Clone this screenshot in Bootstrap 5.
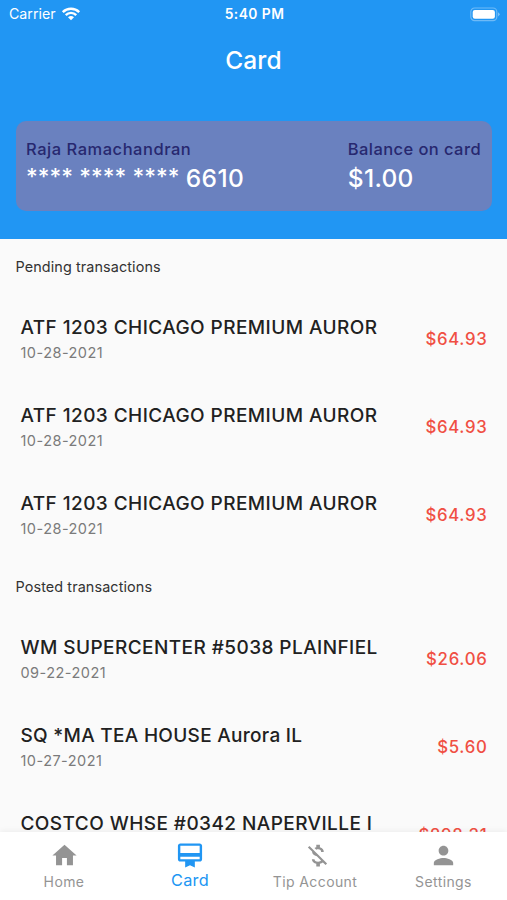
<!DOCTYPE html>
<html lang="en">
<head>
<meta charset="utf-8">
<meta name="viewport" content="width=device-width, initial-scale=1">
<title>Card</title>
<link href="https://cdn.jsdelivr.net/npm/bootstrap@5.3.0/dist/css/bootstrap.min.css" rel="stylesheet">
<style>
  body { font-family: Inter, "Liberation Sans", sans-serif; background: #fafafa; color: #212121; }
  .screen { height: 900px; }
  .top-area { height: 238.5px; background: #2196f3; }
  .status-bar { height: 28px; padding: 0 7px 0 9px; font-size: 14.2px; }
  .status-side { flex: 1 1 0; }
  .carrier { margin-right: 5px; }
  .status-time { font-size: 13.8px; font-weight: 600; letter-spacing: .45px; }
  .app-title { height: 65px; font-size: 24.5px; font-weight: 500; letter-spacing: .1px; }
  .bank-card { margin: 28px 15px 0 16px; height: 90px; padding: 16px 11px 0 10px; border-radius: 10px; background: #6a81bf; }
  .card-label { font-size: 16.5px; line-height: 24px; font-weight: 500; color: #27286f; letter-spacing: .52px; }
  .balance .card-label { letter-spacing: .42px; }
  .card-value { font-size: 24.5px; line-height: 35px; font-weight: 500; letter-spacing: .4px; }
  .balance .card-value { letter-spacing: .3px; }
  .masked { font-size: 22.5px; line-height: 1; letter-spacing: .08px; vertical-align: 2px; }
  .section-title { font-size: 14.4px; line-height: 20px; padding: 18px 16px 18px 15.5px; letter-spacing: .1px; color: #333; }
  .txn { height: 88px; padding: 3px 19.5px 0 20.5px; }
  .txn-text { margin-top: -2px; }
  .txn-name { font-size: 19px; line-height: 27px; font-weight: 500; letter-spacing: .43px; }
  .txn-mixed { letter-spacing: .3px; }
  .txn-date { font-size: 14.5px; line-height: 24px; color: #7b7b7b; letter-spacing: .47px; }
  .txn-amount { font-size: 16.8px; font-weight: 500; color: #f04f43; letter-spacing: .7px; }
  .tab-bar { height: 68.5px; background: #fff; box-shadow: 0 -1px 6px rgba(0,0,0,.06); z-index: 1; }
  .tab { color: #949494; font-size: 14px; line-height: 20px; letter-spacing: .4px; padding-top: 9px; }
  .tab svg { width: 29px; height: 29px; fill: currentColor; }
  .tab span { margin-top: 2px; }
  .tab.active { color: #2196f3; font-size: 16.3px; letter-spacing: .3px; padding-top: 9px; }
  .tab.active svg { width: 30px; height: 29px; }
  .tab.active span { margin-top: 0; }
  .w-home { width: 128px; } .w-card { width: 124px; } .w-tip { width: 126px; } .w-settings { width: 129px; padding-left: 2px; }
  .w-tip svg { margin-left: 5px; }
</style>
<script src="https://cdn.jsdelivr.net/npm/bootstrap@5.3.0/dist/js/bootstrap.bundle.min.js"></script>
</head>
<body>
<div class="screen d-flex flex-column overflow-hidden">
  <header class="top-area text-white flex-shrink-0">
    <div class="status-bar d-flex align-items-center">
      <div class="status-side d-flex align-items-center"><span class="carrier">Carrier</span>
        <svg width="20" height="14" viewBox="0 0 20 15" fill="none" stroke="#fff" stroke-width="2.6"><path d="M1.2 5.5a12.4 12.4 0 0 1 17.6 0M4.4 8.7a7.8 7.8 0 0 1 11.2 0"/><path d="M10 14.3 6.8 11a4.7 4.7 0 0 1 6.4 0z" fill="#fff" stroke="none"/></svg>
      </div>
      <div class="status-time">5:40 PM</div>
      <div class="status-side d-flex justify-content-end">
        <svg width="30" height="15" viewBox="0 0 30 15"><rect x=".8" y="1" width="26" height="12.6" rx="3.8" fill="none" stroke="#fff" stroke-opacity=".35" stroke-width="1.2"/><rect x="2.7" y="2.9" width="22.2" height="8.8" rx="2.2" fill="#fff"/><path d="M28 5.2q1.7 1 1.7 2.1T28 9.4z" fill="#fff" fill-opacity=".4"/></svg>
      </div>
    </div>
    <h1 class="app-title d-flex align-items-center justify-content-center m-0">Card</h1>
    <section class="bank-card d-flex justify-content-between">
      <div><div class="card-label">Raja Ramachandran</div><div class="card-value"><span class="masked">**** **** **** </span>6610</div></div>
      <div class="balance"><div class="card-label">Balance on card</div><div class="card-value">$1.00</div></div>
    </section>
  </header>
  <main class="flex-grow-1 overflow-hidden">
    <h2 class="section-title m-0 fw-normal">Pending transactions</h2>
    <div class="txn d-flex justify-content-between align-items-center"><div class="txn-text"><div class="txn-name">ATF 1203 CHICAGO PREMIUM AUROR</div><div class="txn-date">10-28-2021</div></div><div class="txn-amount">$64.93</div></div>
    <div class="txn d-flex justify-content-between align-items-center"><div class="txn-text"><div class="txn-name">ATF 1203 CHICAGO PREMIUM AUROR</div><div class="txn-date">10-28-2021</div></div><div class="txn-amount">$64.93</div></div>
    <div class="txn d-flex justify-content-between align-items-center"><div class="txn-text"><div class="txn-name">ATF 1203 CHICAGO PREMIUM AUROR</div><div class="txn-date">10-28-2021</div></div><div class="txn-amount">$64.93</div></div>
    <h2 class="section-title m-0 fw-normal">Posted transactions</h2>
    <div class="txn d-flex justify-content-between align-items-center"><div class="txn-text"><div class="txn-name">WM SUPERCENTER #5038 PLAINFIEL</div><div class="txn-date">09-22-2021</div></div><div class="txn-amount">$26.06</div></div>
    <div class="txn d-flex justify-content-between align-items-center"><div class="txn-text"><div class="txn-name txn-mixed">SQ *MA TEA HOUSE Aurora IL</div><div class="txn-date">10-27-2021</div></div><div class="txn-amount">$5.60</div></div>
    <div class="txn d-flex justify-content-between align-items-center"><div class="txn-text"><div class="txn-name">COSTCO WHSE #0342 NAPERVILLE I</div><div class="txn-date">10-27-2021</div></div><div class="txn-amount">$298.31</div></div>
  </main>
  <nav class="tab-bar d-flex flex-shrink-0">
    <div class="tab w-home d-flex flex-column align-items-center"><svg viewBox="0 0 24 24"><path d="M10 20v-6h4v6h5v-8h3L12 3 2 12h3v8z"/></svg><span>Home</span></div>
    <div class="tab active w-card d-flex flex-column align-items-center"><svg viewBox="0 0 24 24"><path d="M20 2H4c-1.11 0-2 .89-2 2v11c0 1.11.89 2 2 2h4v5l4-2 4 2v-5h4c1.11 0 2-.89 2-2V4c0-1.11-.89-2-2-2zm0 13H4v-2h16v2zm0-5H4V4h16v6z"/></svg><span>Card</span></div>
    <div class="tab w-tip d-flex flex-column align-items-center"><svg viewBox="0 0 24 24"><path d="M12.5 6.9c1.78 0 2.44.85 2.5 2.1h2.21c-.07-1.72-1.12-3.3-3.21-3.81V3h-3v2.16c-.53.12-1.03.3-1.48.54l1.47 1.47c.41-.17.91-.27 1.51-.27zM5.33 4.06L4.06 5.33 7.5 8.77c0 2.08 1.56 3.21 3.91 3.91l3.51 3.51c-.34.48-1.05.91-2.42.91-2.06 0-2.87-.92-2.98-2.1h-2.2c.12 2.19 1.76 3.42 3.68 3.83V21h3v-2.15c.96-.18 1.82-.55 2.45-1.12l2.22 2.22 1.27-1.27z"/></svg><span>Tip Account</span></div>
    <div class="tab w-settings d-flex flex-column align-items-center"><svg viewBox="0 0 24 24"><path d="M12 12c2.21 0 4-1.79 4-4s-1.79-4-4-4-4 1.79-4 4 1.79 4 4 4zm0 2c-2.67 0-8 1.34-8 4v2h16v-2c0-2.66-5.33-4-8-4z"/></svg><span>Settings</span></div>
  </nav>
</div>
</body>
</html>
